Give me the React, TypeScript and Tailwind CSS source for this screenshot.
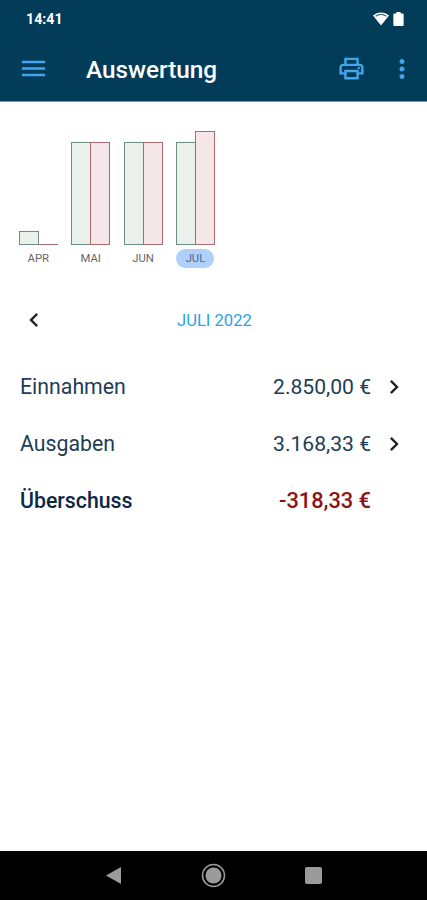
import { MdChevronLeft, MdChevronRight, MdMenu, MdMoreVert, MdOutlinePrint } from 'react-icons/md';

type Month = { label: string; income: number; expense: number; active?: boolean };

// bar heights in px
const months: Month[] = [
  { label: 'APR', income: 14, expense: 1 },
  { label: 'MAI', income: 103, expense: 103 },
  { label: 'JUN', income: 103, expense: 103 },
  { label: 'JUL', income: 103, expense: 114, active: true },
];

const rows = [
  { label: 'Einnahmen', value: '2.850,00 €' },
  { label: 'Ausgaben', value: '3.168,33 €' },
];

function StatusBar() {
  return (
    <div className="flex h-[37px] items-center justify-between pl-[26px] pr-[23px] text-white">
      <span className="pt-px text-[14.2px] font-bold leading-none">14:41</span>
      <div className="flex items-center gap-[4px]">
        <svg width="16" height="14" viewBox="0 0 16 14">
          <path d="M0 3.4C4.5-.5 11.5-.5 16 3.4L8 13.5Z" fill="#fff" />
          <path d="M2.5 4.3C6 1.9 10 1.9 13.5 4.3" fill="none" stroke="#536b70" strokeWidth="1.3" />
        </svg>
        <svg width="11" height="14" viewBox="0 0 11 15">
          <path d="M3.2 0h4.6v1.5H10a1 1 0 0 1 1 1V14a1 1 0 0 1-1 1H1a1 1 0 0 1-1-1V2.5a1 1 0 0 1 1-1h2.2z" fill="#fff" />
        </svg>
      </div>
    </div>
  );
}

function Chart() {
  return (
    <div className="flex h-[166px] items-end gap-[13.4px] pl-[18.8px]">
      {months.map((m) => (
        <div key={m.label} className="flex w-[39px] flex-col items-center">
          <div className="flex w-full items-end">
            <div className="w-[20px] border border-[#6b9080] bg-[#eaf1ed]" style={{ height: m.income }} />
            <div
              className={`-ml-px w-[20px] border-[#ab6a70] bg-[#f5e6e7] ${m.expense > 1 ? 'border' : 'border-t'}`}
              style={{ height: m.expense }}
            />
          </div>
          <span
            className={`mt-[4px] flex h-[19px] w-[38px] items-center justify-center rounded-full pt-px text-[11.3px] ${
              m.active ? 'bg-[#aed0fb] text-[#4d6b8b]' : 'text-[#666]'
            }`}
          >
            {m.label}
          </span>
        </div>
      ))}
    </div>
  );
}

export default function App() {
  return (
    <div className="flex h-[900px] w-[427px] flex-col overflow-hidden bg-white font-['Roboto',sans-serif]">
      <header className="h-[102px] border-b border-[#8198a8] bg-[#033c59]">
        <StatusBar />
        <div className="flex h-[63px] items-center pl-[18px] pr-[10px] text-[#42a5ee]">
          <MdMenu size={31} />
          <h1 className="ml-[37px] flex-1 pt-[3px] text-[24.3px] font-medium leading-none text-white">Auswertung</h1>
          <MdOutlinePrint size={29} />
          <MdMoreVert size={30} className="ml-[21px]" />
        </div>
      </header>

      <main className="flex-1">
        <Chart />

        <div className="mt-[28px] flex h-[48px] items-center">
          <MdChevronLeft size={28} className="ml-[20px] text-[#222]" />
          <span className="ml-[129px] pt-[2px] text-[16.6px] leading-none text-[#29a3e6]">JULI 2022</span>
        </div>

        <div className="mt-[14px] text-[21.3px] leading-none text-[#1d3d57]">
          {rows.map((r) => (
            <div key={r.label} className="flex h-[57px] items-center pl-[20px] pr-[19px]">
              <span className="flex-1 pt-px">{r.label}</span>
              <span className="pt-px text-[21.1px]">{r.value}</span>
              <MdChevronRight size={28} className="ml-[9px] text-[#222]" />
            </div>
          ))}
          <div className="flex h-[57px] items-center pl-[20px] pr-[56px] font-medium">
            <span className="flex-1 pt-px text-[#0b2845]">Überschuss</span>
            <span className="pt-px text-[21.8px] text-[#8f1212]">-318,33 €</span>
          </div>
        </div>
      </main>

      <nav className="flex h-[49px] items-center justify-between bg-black pl-[105px] pr-[105px]">
        <svg width="17" height="19" viewBox="0 0 17 19">
          <path d="M16 1v17L1 9.5z" fill="#9b9b9b" />
        </svg>
        <svg width="25" height="25" viewBox="0 0 25 25">
          <circle cx="12.5" cy="12.5" r="11" fill="none" stroke="#9b9b9b" strokeWidth="1.5" />
          <circle cx="12.5" cy="12.5" r="8" fill="#9b9b9b" />
        </svg>
        <div className="h-[17px] w-[17px] rounded-[2px] bg-[#9b9b9b]" />
      </nav>
    </div>
  );
}
